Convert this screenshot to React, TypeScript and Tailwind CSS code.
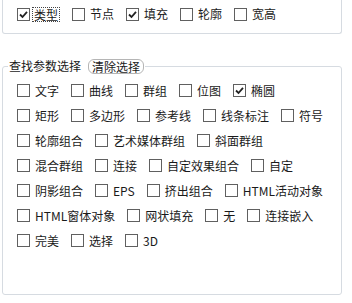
import React from "react";

const font = { fontFamily: '"Noto Sans CJK SC", "Noto Sans", sans-serif' };

function Box({ checked }: { checked?: boolean }) {
  return (
    <span className="w-[13px] h-[13px] border border-[#606060] bg-white flex items-center justify-center shrink-0">
      {checked && (
        <svg width="9" height="9" viewBox="0 0 9 9">
          <path d="M1 4.5 L3.5 7 L8 1.8" fill="none" stroke="#222" strokeWidth="1.8" />
        </svg>
      )}
    </span>
  );
}

function Item({ label, checked, focus }: { label: string; checked?: boolean; focus?: boolean }) {
  return (
    <div className="flex items-center gap-[5px]">
      <Box checked={checked} />
      {focus ? (
        <span className="border border-dotted border-[#444] px-[1px] -ml-[3px] leading-[13px]">{label}</span>
      ) : (
        <span className="leading-[14px]">{label}</span>
      )}
    </div>
  );
}

const rows: [string, boolean?][][] = [
  [["文字"], ["曲线"], ["群组"], ["位图"], ["椭圆", true]],
  [["矩形"], ["多边形"], ["参考线"], ["线条标注"], ["符号"]],
  [["轮廓组合"], ["艺术媒体群组"], ["斜面群组"]],
  [["混合群组"], ["连接"], ["自定效果组合"], ["自定"]],
  [["阴影组合"], ["EPS"], ["挤出组合"], ["HTML活动对象"]],
  [["HTML窗体对象"], ["网状填充"], ["无"], ["连接嵌入"]],
  [["完美"], ["选择"], ["3D"]],
];

export default function App() {
  return (
    <div className="w-[352px] h-[303px] bg-white text-[12px] text-[#1a1a1a] overflow-hidden" style={font}>
      <div className="ml-[2px] w-[340px] h-[34px] border-x border-b border-[#d6dbe1] rounded-b-[3px] flex items-center gap-[12px] pl-[14px] pb-[5px]">
        <Item label="类型" checked focus />
        <Item label="节点" />
        <Item label="填充" checked />
        <Item label="轮廓" />
        <Item label="宽高" />
      </div>
      <fieldset className="mt-[24px] ml-[2px] w-[340px] h-[237px] border border-[#d6dbe1] rounded-[3px] pl-[14px]">
        <legend className="-ml-[9px] px-[1px] flex items-center gap-[7px] h-[16px]">
          <span className="leading-[14px]">查找参数选择</span>
          <span className="border border-[#b5b5b5] rounded-[6px] h-[15px] px-[3px] flex items-center leading-[13px]">清除选择</span>
        </legend>
        <div className="pt-[4px] flex flex-col">
          {rows.map((r, i) => (
            <div key={i} className="h-[25px] flex items-center gap-[12px]">
              {r.map(([l, c]) => (
                <Item key={l} label={l} checked={c} />
              ))}
            </div>
          ))}
        </div>
      </fieldset>
    </div>
  );
}
